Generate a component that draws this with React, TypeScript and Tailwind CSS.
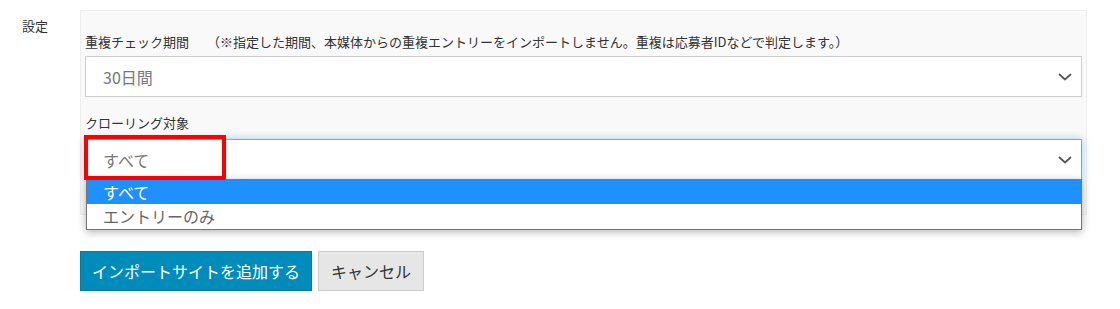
import React from 'react';

const Chevron: React.FC = () => (
  <svg width="14" height="8" viewBox="0 0 14 8" fill="none" className="shrink-0">
    <path d="M1.5 1.5 L7 6.5 L12.5 1.5" stroke="#555" strokeWidth="1.7" strokeLinecap="round" strokeLinejoin="round" />
  </svg>
);

const App: React.FC = () => {
  return (
    <div className="relative w-[1120px] h-[309px] bg-white text-[#333] font-['Noto_Sans_CJK_JP','Noto_Sans',sans-serif]">
      <div className="flex pt-[10px]">
        {/* Row label */}
        <div className="w-[80px] shrink-0 pl-[22px] pt-[7px] text-[13px] leading-[18px]">設定</div>

        {/* Settings panel */}
        <div className="w-[1007px] bg-[#f9f9f9] border border-[#eee] px-[4px] pt-[22px] pb-[34px]">
          <label className="block text-[13px] leading-[18px] mb-[5px] whitespace-nowrap">
            重複チェック期間
            <span className="ml-[18px]">（※指定した期間、本媒体からの重複エントリーをインポートしません。重複は応募者IDなどで判定します。）</span>
          </label>
          <div className="h-[41px] bg-white border border-[#ccc] flex items-center justify-between pl-[17px] pr-[9px] text-[16px] text-[#777]">
            <span>30日間</span>
            <Chevron />
          </div>

          <label className="block text-[13px] leading-[18px] mt-[17px] mb-[7px]">クローリング対象</label>
          <div className="relative">
            <div className="h-[41px] bg-white border border-[#66afe9] shadow-[0_0_8px_rgba(102,175,233,0.6)] flex items-center justify-between pl-[17px] pr-[9px] text-[16px] text-[#777]">
              <span>すべて</span>
              <Chevron />
            </div>

            {/* Open option list */}
            <ul className="absolute left-[1px] right-0 top-[40px] z-10 bg-white border border-[#767676] shadow-[0_2px_8px_rgba(0,0,0,0.3)] text-[16px]">
              <li className="h-[24px] leading-[24px] pl-[16px] bg-[#1e90ff] text-white">すべて</li>
              <li className="h-[25px] leading-[25px] pl-[16px] text-[#666]">エントリーのみ</li>
            </ul>
          </div>
        </div>
      </div>

      {/* Actions */}
      <div className="flex gap-[6px] ml-[80px] mt-[36px]">
        <button className="h-[40px] px-[11px] bg-[#008cba] border border-[#007ba3] text-white text-[16px]">
          インポートサイトを追加する
        </button>
        <button className="h-[40px] px-[12px] bg-[#e6e6e6] border border-[#ccc] text-[#333] text-[16px]">
          キャンセル
        </button>
      </div>

      {/* Annotation box */}
      <div className="absolute left-[84px] top-[135px] w-[142px] h-[45px] border-[4px] border-[#ff0000] z-20" />
    </div>
  );
};

export default App;
